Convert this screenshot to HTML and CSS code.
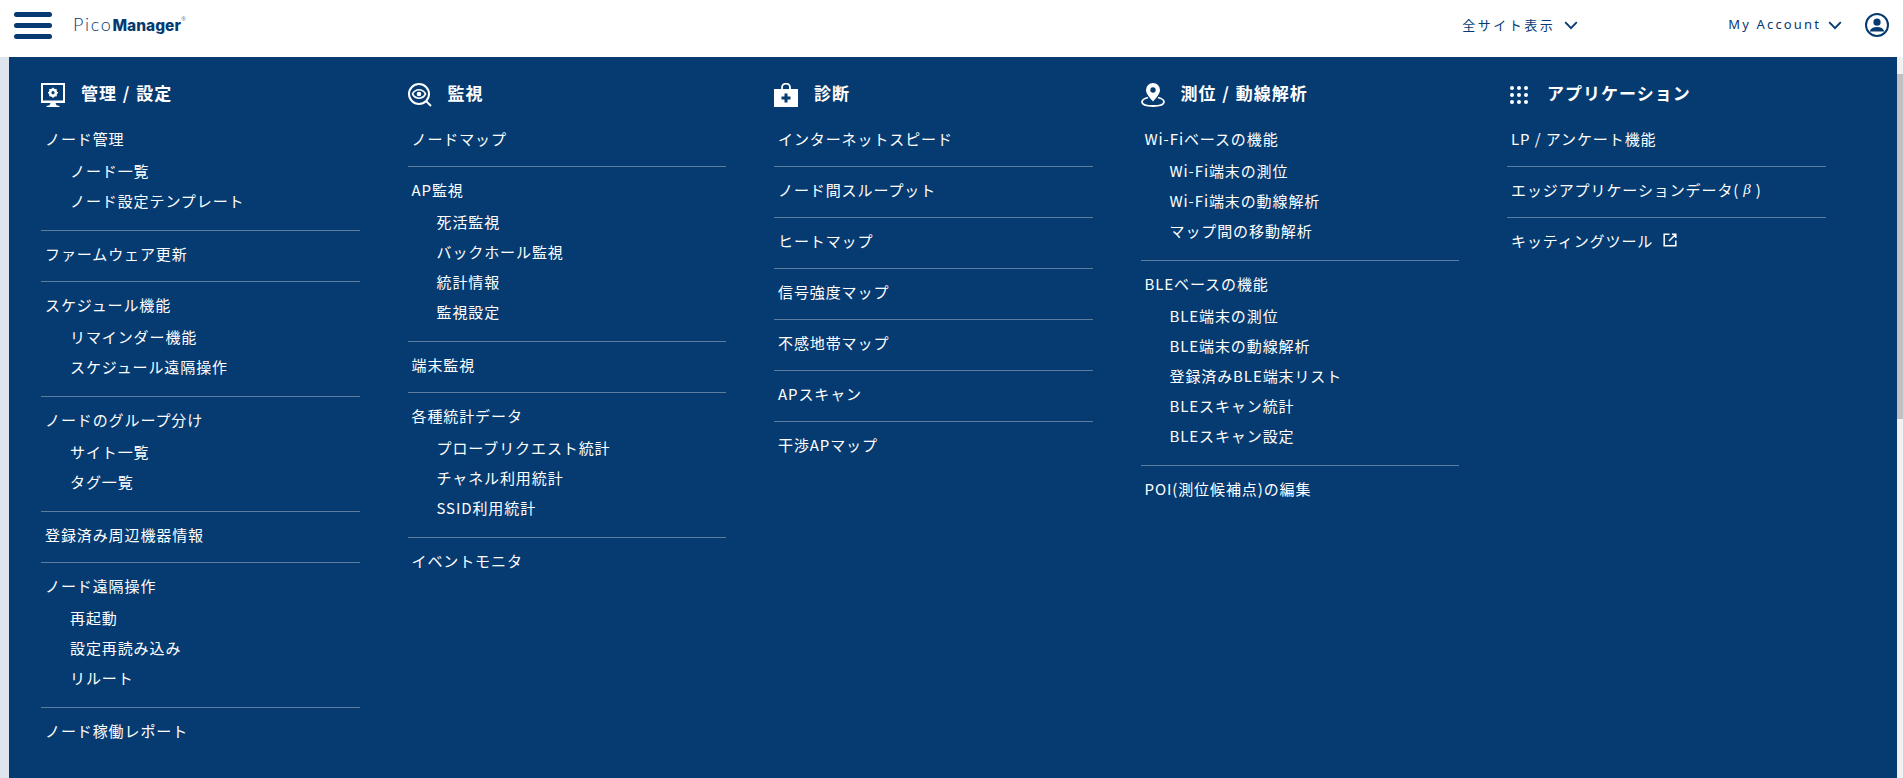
FILE: index.html
```html
<!DOCTYPE html>
<html lang="ja">
<head>
<meta charset="utf-8">
<title>PicoManager</title>
<link rel="stylesheet" href="styles.css">
</head>
<body>
<header class="topbar">
    <div class="burger"><span></span><span></span><span></span></div>
    <div class="logo"><span class="logo-thin">Pico</span><span class="logo-bold">Manager</span><span class="logo-mark">®</span></div>
    <div class="site-select"><span class="topbar-label">全サイト表示</span>
        <svg class="chevron" viewBox="0 0 14 9"><path d="M1.2 1.2 7 7.2l5.8-6"/></svg>
    </div>
    <div class="account"><span class="topbar-label">My Account</span>
        <svg class="chevron" viewBox="0 0 14 9"><path d="M1.2 1.2 7 7.2l5.8-6"/></svg>
    </div>
    <svg class="user-icon" viewBox="0 0 24 24">
        <circle cx="12" cy="12" r="11" fill="none" stroke="#063b71" stroke-width="2"/>
        <circle cx="12" cy="9.2" r="3.6" fill="#063b71"/>
        <path d="M4.6 18.6c1-3.2 3.6-4.6 7.4-4.6s6.400 1.400 7.400 4.600z" fill="#063b71"/>
    </svg>
</header>

<div class="page">
<div class="side-strip"></div>
<main class="panel">

<section class="column">
    <h2 class="heading">
        <svg class="heading-icon" viewBox="0 0 24 24">
            <path d="M0 0h24v20H0z M2 2v15.500h20V2z" fill="#fff" fill-rule="evenodd"/>
            <path d="M9.500 20h5l1 2.200 3 .8v1H5.500v-1l3-.8z" fill="#fff"/>
            <circle cx="12" cy="9.700" r="3.200" fill="none" stroke="#fff" stroke-width="2.200"/>
            <path d="M12 4.700v10M7 9.700h10M8.500 6.200l7 7M15.500 6.200l-7 7" stroke="#fff" stroke-width="1.500"/>
            <circle cx="12" cy="9.700" r="1.600" fill="#063b71"/>
        </svg>
        管理 / 設定
    </h2>
    <div class="group">
        <div class="item">ノード管理</div>
        <div class="sub">ノード一覧</div>
        <div class="sub">ノード設定テンプレート</div>
    </div>
    <div class="group"><div class="item">ファームウェア更新</div></div>
    <div class="group">
        <div class="item">スケジュール機能</div>
        <div class="sub">リマインダー機能</div>
        <div class="sub">スケジュール遠隔操作</div>
    </div>
    <div class="group">
        <div class="item">ノードのグループ分け</div>
        <div class="sub">サイト一覧</div>
        <div class="sub">タグ一覧</div>
    </div>
    <div class="group"><div class="item">登録済み周辺機器情報</div></div>
    <div class="group">
        <div class="item">ノード遠隔操作</div>
        <div class="sub">再起動</div>
        <div class="sub">設定再読み込み</div>
        <div class="sub">リルート</div>
    </div>
    <div class="group"><div class="item">ノード稼働レポート</div></div>
</section>

<section class="column">
    <h2 class="heading">
        <svg class="heading-icon" viewBox="0 0 24 24">
            <circle cx="11" cy="11" r="10" fill="none" stroke="#fff" stroke-width="2"/>
            <path d="M18 18l5 5" stroke="#fff" stroke-width="2"/>
            <path d="M4.500 11c1.500-2.800 3.800-4.200 6.500-4.200s5 1.400 6.500 4.200c-1.500 2.800-3.800 4.200-6.500 4.200S6 13.800 4.500 11z" fill="none" stroke="#fff" stroke-width="1.600"/>
            <circle cx="11" cy="11" r="2.300" fill="#fff"/>
        </svg>
        監視
    </h2>
    <div class="group"><div class="item">ノードマップ</div></div>
    <div class="group">
        <div class="item">AP監視</div>
        <div class="sub">死活監視</div>
        <div class="sub">バックホール監視</div>
        <div class="sub">統計情報</div>
        <div class="sub">監視設定</div>
    </div>
    <div class="group"><div class="item">端末監視</div></div>
    <div class="group">
        <div class="item">各種統計データ</div>
        <div class="sub">プローブリクエスト統計</div>
        <div class="sub">チャネル利用統計</div>
        <div class="sub">SSID利用統計</div>
    </div>
    <div class="group"><div class="item">イベントモニタ</div></div>
</section>

<section class="column">
    <h2 class="heading">
        <svg class="heading-icon" viewBox="0 0 24 24">
            <path d="M8 6V4.500a4 4 0 0 1 8 0V6" fill="none" stroke="#fff" stroke-width="1.800"/>
            <path d="M0 6h24v18H0z" fill="#fff"/>
            <path d="M10.500 10.500h3V13.500h3v3h-3v3h-3v-3h-3v-3h3z" fill="#063b71"/>
        </svg>
        診断
    </h2>
    <div class="group"><div class="item">インターネットスピード</div></div>
    <div class="group"><div class="item">ノード間スループット</div></div>
    <div class="group"><div class="item">ヒートマップ</div></div>
    <div class="group"><div class="item">信号強度マップ</div></div>
    <div class="group"><div class="item">不感地帯マップ</div></div>
    <div class="group"><div class="item">APスキャン</div></div>
    <div class="group"><div class="item">干渉APマップ</div></div>
</section>

<section class="column">
    <h2 class="heading">
        <svg class="heading-icon" viewBox="0 0 24 24">
            <path d="M12 0a7 7 0 0 0-7 7c0 3.800 4.200 8.500 7 11.500 2.800-3 7-7.700 7-11.500a7 7 0 0 0-7-7z" fill="#fff"/>
            <circle cx="12" cy="7" r="2.700" fill="#063b71"/>
            <path d="M7 14.500c-3.500.9-6 2.600-6 4.500 0 2.700 5 4 11 4s11-1.300 11-4c0-1.900-2.500-3.600-6-4.500" fill="none" stroke="#fff" stroke-width="1.800"/>
        </svg>
        測位 / 動線解析
    </h2>
    <div class="group">
        <div class="item">Wi-Fiベースの機能</div>
        <div class="sub">Wi-Fi端末の測位</div>
        <div class="sub">Wi-Fi端末の動線解析</div>
        <div class="sub">マップ間の移動解析</div>
    </div>
    <div class="group">
        <div class="item">BLEベースの機能</div>
        <div class="sub">BLE端末の測位</div>
        <div class="sub">BLE端末の動線解析</div>
        <div class="sub">登録済みBLE端末リスト</div>
        <div class="sub">BLEスキャン統計</div>
        <div class="sub">BLEスキャン設定</div>
    </div>
    <div class="group"><div class="item">POI(測位候補点)の編集</div></div>
</section>

<section class="column">
    <h2 class="heading">
        <svg class="heading-icon" viewBox="0 0 24 24">
            <g fill="#fff">
                <circle cx="5" cy="5" r="2"/><circle cx="12" cy="5" r="2"/><circle cx="19" cy="5" r="2"/>
                <circle cx="5" cy="12" r="2"/><circle cx="12" cy="12" r="2"/><circle cx="19" cy="12" r="2"/>
                <circle cx="5" cy="19" r="2"/><circle cx="12" cy="19" r="2"/><circle cx="19" cy="19" r="2"/>
            </g>
        </svg>
        アプリケーション
    </h2>
    <div class="group"><div class="item">LP / アンケート機能</div></div>
    <div class="group"><div class="item">エッジアプリケーションデータ(<i class="beta">β</i>)</div></div>
    <div class="group">
        <div class="item">キッティングツール
            <svg class="external" viewBox="0 0 14 14"><path d="M6.500 1.200H1.200v11.600h11.600V7.500M9 1.200h3.800V5M12.800 1.200 6 8" fill="none" stroke="#fff" stroke-width="1.500"/></svg>
        </div>
    </div>
</section>

</main>
<div class="scrollbar">
    <div class="scroll-arrow"></div>
    <div class="scroll-thumb"></div>
</div>
</div>
</body>
</html>
```

FILE: styles.css
```css
html, body {
    margin: 0;
    height: 100%;
    overflow: hidden;
}

body {
    display: flex;
    flex-direction: column;
    background-color: #fff;
    font-family: "Noto Sans CJK JP", "Noto Sans", sans-serif;
    color: #063b71;
}

.topbar {
    display: flex;
    align-items: center;
    box-sizing: border-box;
    height: 57px;
    flex-shrink: 0;
    padding: 0 14px 7px;
}

.burger {
    display: flex;
    flex-direction: column;
    gap: 6px;
    width: 38px;
}

.burger span {
    height: 5px;
    border-radius: 3px;
    background-color: #063b71;
}

.logo {
    display: flex;
    align-items: baseline;
    margin-left: 21px;
    margin-right: auto;
    font-size: 18px;
    line-height: 20px;
}

.logo-thin {
    font-family: "Lato", sans-serif;
    font-weight: 300;
    letter-spacing: 1.700px;
}

.logo-bold {
    font-family: "Inter", sans-serif;
    font-weight: 800;
    font-size: 15.500px;
}

.logo-mark {
    font-family: "Noto Sans", sans-serif;
    font-size: 6px;
    align-self: flex-start;
    line-height: 10px;
    color: #6b8aa8;
}

.site-select, .account {
    display: flex;
    align-items: center;
    font-size: 13px;
    white-space: nowrap;
}

.topbar-label {
    margin-bottom: 2px;
}

.site-select {
    margin-right: 150px;
    letter-spacing: 2.500px;
}

.site-select .chevron {
    margin-left: 9px;
}

.account {
    margin-right: 23px;
    font-family: "Noto Sans", sans-serif;
    letter-spacing: 2.150px;
}

.chevron {
    width: 14px;
    height: 9px;
    margin-left: 7px;
    fill: none;
    stroke: #063b71;
    stroke-width: 1.900;
}

.user-icon {
    width: 24px;
    height: 24px;
}

.page {
    display: flex;
    flex: 1;
    min-height: 0;
}

.side-strip {
    width: 9px;
    background-color: #dfe5ee;
}

.panel {
    flex: 1;
    display: grid;
    grid-template-columns: repeat(5, 318.500px);
    column-gap: 48px;
    align-items: start;
    padding: 20px 0 0 32px;
    background-color: #063b71;
    color: #fff;
}

.heading {
    display: flex;
    align-items: center;
    box-sizing: border-box;
    height: 34px;
    margin: 0 0 5px;
    padding-bottom: 2px;
    font-size: 17px;
    font-weight: 700;
    letter-spacing: 1px;
    word-spacing: 1px;
    line-height: 22px;
}

.heading-icon {
    width: 24px;
    height: 24px;
    margin-right: 16px;
    margin-top: 3px;
    flex-shrink: 0;
}

.group {
    padding: 10px 0 10px 4px;
    border-bottom: 1px solid #5a7da0;
}

.group:last-child {
    border-bottom: none;
}

.item, .sub {
    display: flex;
    align-items: center;
    box-sizing: border-box;
    height: 30px;
    padding-bottom: 6px;
    font-size: 15px;
    letter-spacing: 0.900px;
    white-space: nowrap;
}

.sub {
    padding-left: 25px;
}

.item + .sub {
    margin-top: 2px;
}

.sub:last-child {
    margin-bottom: 2px;
}

.beta {
    padding: 0 4px;
    font-family: "Liberation Serif", serif;
}

.external {
    width: 14px;
    height: 14px;
    margin-left: 10px;
}

.scrollbar {
    width: 6px;
    background-color: #f1f1f1;
    flex-shrink: 0;
}

.scroll-arrow {
    height: 17px;
}

.scroll-thumb {
    height: 345px;
    background-color: #c1c1c1;
}
```
